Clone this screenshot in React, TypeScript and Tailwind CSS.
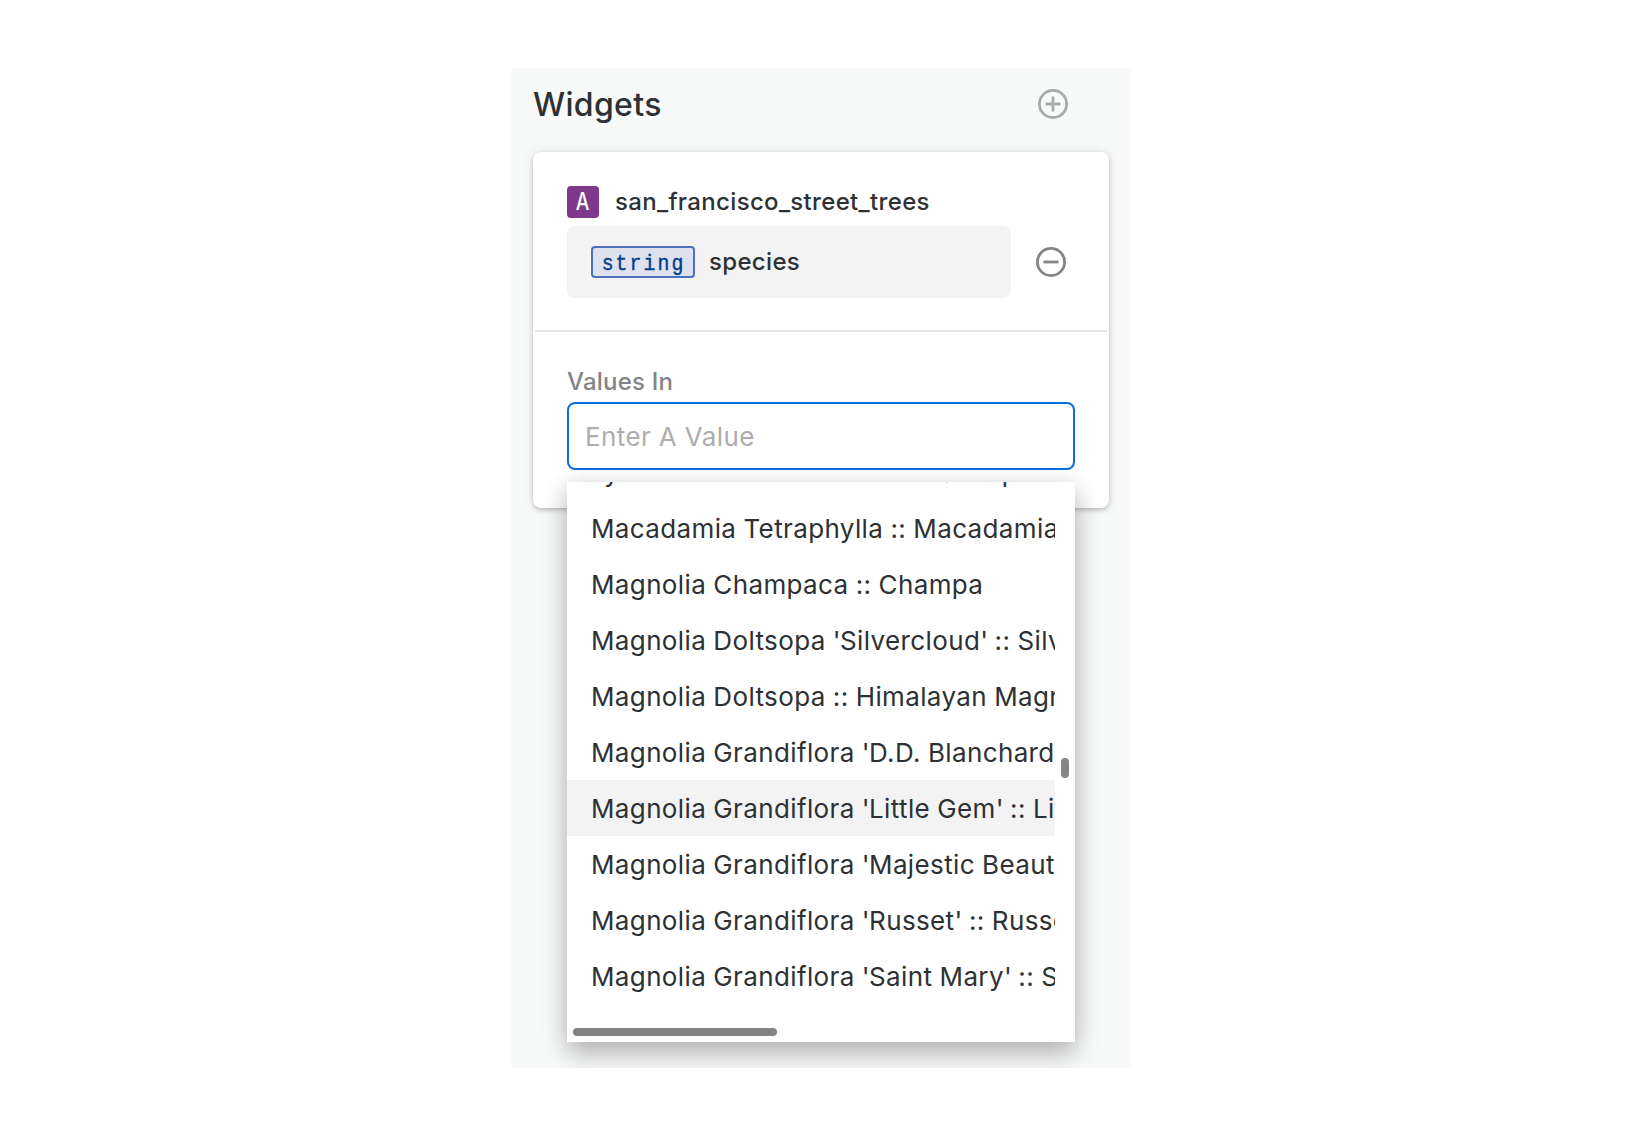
import React from "react";

const species = [
  "Lyonothamnus Floribundus Subsp.",
  "Macadamia Tetraphylla :: Macadamia Nut",
  "Magnolia Champaca :: Champa",
  "Magnolia Doltsopa 'Silvercloud' :: Silvercloud Magnolia",
  "Magnolia Doltsopa :: Himalayan Magnolia",
  "Magnolia Grandiflora 'D.D. Blanchard'",
  "Magnolia Grandiflora 'Little Gem' :: Little Gem Magnolia",
  "Magnolia Grandiflora 'Majestic Beauty'",
  "Magnolia Grandiflora 'Russet' :: Russet Magnolia",
  "Magnolia Grandiflora 'Saint Mary' :: Saint Mary Magnolia",
];

/* Tightens the straight quotes around cultivar names. */
function SpeciesName({ name }: { name: string }) {
  return (
    <>
      {name.split(/(')/).map((part, i) =>
        part === "'" ? (
          <span key={i} className="tracking-[-0.6px]">
            {part}
          </span>
        ) : (
          part
        ),
      )}
    </>
  );
}

function CircleIcon({ plus, className }: { plus?: boolean; className: string }) {
  return (
    <svg viewBox="0 0 30 30" className={`h-[30px] w-[30px] ${className}`} fill="none" stroke="currentColor">
      <circle cx="15" cy="15" r="13.6" strokeWidth="2.8" />
      <path d={plus ? "M7.5 15h15M15 7.5v15" : "M7.5 15h15"} strokeWidth="2.8" />
    </svg>
  );
}

export default function App() {
  return (
    <div className="flex h-[1133px] w-[1640px] bg-white pl-[511px] pt-[68px] font-['Inter',sans-serif] tracking-[0.33px] text-[#2d3134]">
      <div className="h-[1000px] w-[620px] overflow-hidden bg-[#f8faf9] px-[22px]">
        <header className="flex h-[84px] items-center justify-between pb-3 pr-[41px]">
          <h1 className="pt-0.5 text-[32px] font-medium leading-10">Widgets</h1>
          <button aria-label="Add widget">
            <CircleIcon plus className="text-[#a9abab]" />
          </button>
        </header>

        <section className="h-[356px] rounded-lg bg-white shadow-[0_2px_4px_rgba(0,0,0,0.2),0_0_12px_rgba(0,0,0,0.1)]">
          <div className="px-[34px] pt-[34px]">
            <div className="flex h-8 items-center">
              <span className="flex h-8 w-8 items-center justify-center rounded bg-[#7d3a8c] text-2xl font-medium text-white">
                <span className="scale-x-[0.8]">A</span>
              </span>
              <span className="ml-4 text-2xl font-medium">san_francisco_street_trees</span>
            </div>
            <div className="mt-2 flex items-center">
              <div className="flex h-[72px] w-[444px] items-center rounded-lg bg-[#f3f3f3] pl-6">
                <span className="flex h-8 w-[104px] items-center justify-center rounded border-2 border-[#4c72bc] bg-[#dfe2ee] font-['Liberation_Mono',monospace] text-[22px] tracking-[2.3px] text-[#00408a] [-webkit-text-stroke:0.4px_#00408a]">
                  <span className="ml-0.5 mt-[5px] scale-x-90">string</span>
                </span>
                <span className="ml-[14px] text-2xl font-medium">species</span>
              </div>
              <button aria-label="Remove field" className="ml-[25px]">
                <CircleIcon className="text-[#838485]" />
              </button>
            </div>
          </div>
          <hr className="mx-0.5 mt-8 border-t-2 border-[#e6e6e6]" />
          <div className="px-[34px] pt-8">
            <label className="block h-[38px] text-2xl font-medium leading-9 tracking-[0.22px] text-[#838485]">
              Values In
            </label>
            <div className="flex h-[68px] items-center rounded-lg border-2 border-[#0b6fe4] bg-white pl-4 text-[26px] tracking-[0.38px] text-[#adadad]">
              <span>Enter A Value</span>
            </div>
            <div className="relative z-10 mt-3 h-[560px] w-[508px] bg-white shadow-[0_12px_24px_rgba(0,0,0,0.26),0_0_24px_rgba(0,0,0,0.08)]">
              <div className="h-[540px] w-[488px] overflow-hidden">
                <ul className="-mt-[38px]">
                  {species.map((name, i) => (
                    <li
                      key={name}
                      className={`h-14 whitespace-nowrap pl-6 text-[26px] leading-[58px] tracking-[0.37px] [word-spacing:-0.5px] ${i === 6 ? "bg-[#f3f3f3]" : ""}`}
                    >
                      <SpeciesName name={name} />
                    </li>
                  ))}
                </ul>
              </div>
              <span className="absolute right-1.5 top-[276px] h-5 w-2 rounded-full bg-[#838485]" />
              <span className="absolute bottom-1.5 left-1.5 h-2 w-[204px] rounded-full bg-[#838485]" />
            </div>
          </div>
        </section>
      </div>
    </div>
  );
}
